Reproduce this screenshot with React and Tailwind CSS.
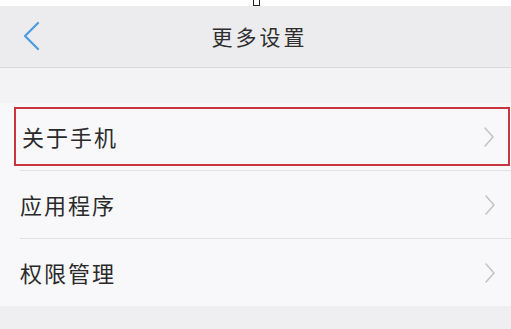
const rows = ['关于手机', '应用程序', '权限管理'];

function RightArrow() {
  return (
    <svg width="12" height="22" viewBox="0 0 12 22" fill="none">
      <path d="M2 2 L10 11 L2 20" stroke="#c4c4c6" strokeWidth="1.6" strokeLinecap="round" strokeLinejoin="round" />
    </svg>
  );
}

function BackArrow() {
  return (
    <svg className="absolute left-[22px] top-[15px]" width="20" height="30" viewBox="0 0 20 30" fill="none">
      <path d="M16 2 L3 15 L16 28" stroke="#4a9be0" strokeWidth="2.2" strokeLinecap="round" strokeLinejoin="round" />
    </svg>
  );
}

export default function App() {
  const font = { fontFamily: '"Noto Sans CJK SC", "Noto Sans", sans-serif' };
  return (
    <div className="w-[511px] h-[329px] overflow-hidden bg-[#efeef1] flex flex-col" style={font}>
      {/* top strip */}
      <div className="h-[6px] bg-white flex justify-center">
        <div className="w-[7px] h-[6px] border border-t-0 border-[#222] ml-[2px]" />
      </div>

      {/* header */}
      <div className="h-[62px] bg-[#ecebee] border-b border-[#d9d8dc] relative flex items-center justify-center">
        <BackArrow />
        <span className="text-[21px] tracking-[3px] text-[#2e2e2e] ml-[8px]">更多设置</span>
      </div>

      <div className="h-[35px] bg-[#f3f2f5]" />

      {/* list */}
      <div className="bg-[#f8f7fa] flex flex-col">
        {rows.map((label, i) => (
          <div key={label} className="flex flex-col">
            {i > 0 && <div className="h-px bg-[#e2e1e5] ml-[20px]" />}
            <div className="h-[67px] flex items-center">
              {i === 0 ? (
                <div className="ml-[14px] w-[496px] h-[59px] border-2 border-[#c9343e] flex items-center justify-between pl-[6px] pr-[13px]">
                  <span className="text-[22px] tracking-[2px] text-[#2a2a2a]">{label}</span>
                  <RightArrow />
                </div>
              ) : (
                <div className="flex-1 flex items-center justify-between pl-[20px] pr-[15px]">
                  <span className="text-[22px] tracking-[2px] text-[#2a2a2a]">{label}</span>
                  <RightArrow />
                </div>
              )}
            </div>
          </div>
        ))}
      </div>
    </div>
  );
}
